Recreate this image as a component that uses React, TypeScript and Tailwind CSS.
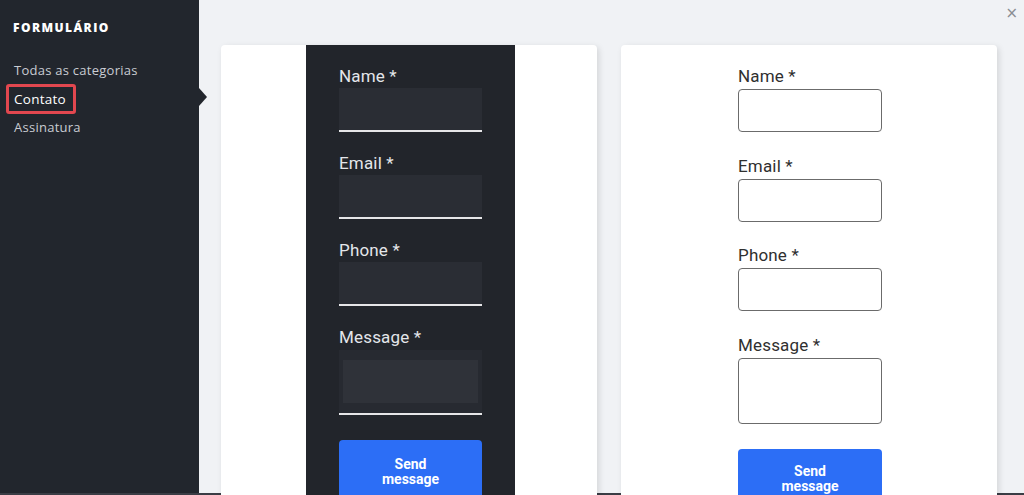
import React from "react";

const darkFields = [
  { label: "Name *" },
  { label: "Email *" },
  { label: "Phone *" },
];

function DarkForm() {
  return (
    <div className="w-[209px] h-full bg-[#22252b] pt-[20px] pl-[33px] flex flex-col" style={{ fontFamily: "Roboto, sans-serif" }}>
      {darkFields.map((f) => (
        <div key={f.label} className="flex flex-col mb-[20px]">
          <label className="text-[17px] leading-[23px] tracking-[0.01em] text-[#e4e6ea]">{f.label}</label>
          <div className="w-[143px] h-[44px] bg-[#2a2d34] border-b-2 border-[#e6e6e8]" />
        </div>
      ))}
      <div className="flex flex-col">
        <label className="text-[17px] leading-[23px] tracking-[0.01em] text-[#e4e6ea] mb-[1px]">Message *</label>
        <div className="w-[143px] h-[65px] bg-[#272a31] border-b-2 border-[#e6e6e8] pt-[10px] px-[4px]">
          <div className="h-[43px] bg-[#2f3239]" />
        </div>
      </div>
      <button className="mt-[25px] w-[143px] h-[60px] bg-[#2c6ef6] rounded-[4px] text-white font-bold text-[14px] leading-[15px] pt-[17px] flex flex-col items-center justify-start">
        <span>Send</span>
        <span>message</span>
      </button>
    </div>
  );
}

function LightForm() {
  const fields = ["Name *", "Email *", "Phone *"];
  return (
    <div className="pt-[19px] pl-[117px] flex flex-col" style={{ fontFamily: "Roboto, sans-serif" }}>
      {fields.map((f) => (
        <div key={f} className="flex flex-col mb-[21.5px]">
          <label className="text-[17px] leading-[24px] tracking-[0.01em] text-[#2f2f2f] mb-[1px]">{f}</label>
          <div className="w-[144px] h-[43px] bg-white border border-[#6b6b6b] rounded-[4px]" />
        </div>
      ))}
      <div className="flex flex-col">
        <label className="text-[17px] leading-[24px] tracking-[0.01em] text-[#2f2f2f] mb-[1px]">Message *</label>
        <div className="w-[144px] h-[66px] bg-white border border-[#6b6b6b] rounded-[4px]" />
      </div>
      <button className="mt-[25px] w-[144px] h-[60px] bg-[#2c6ef6] rounded-[4px] text-white font-bold text-[14px] leading-[15px] pt-[15px] flex flex-col items-center justify-start">
        <span>Send</span>
        <span>message</span>
      </button>
    </div>
  );
}

export default function App() {
  return (
    <div className="w-[1024px] h-[495px] flex flex-col overflow-hidden bg-[#f0f2f5]">
      <div className="flex flex-1 min-h-0">
        <aside className="relative w-[199px] shrink-0 bg-[#22262d] pt-[20px]" style={{ fontFamily: "'Open Sans', 'Noto Sans', sans-serif" }}>
          <h2 className="pl-[13px] text-[12px] leading-[16px] font-extrabold tracking-[0.12em] text-white">FORMULÁRIO</h2>
          <nav className="mt-[21px] flex flex-col text-[13px] leading-[27px] tracking-[0.02em]">
            <a className="pl-[14px] text-[#c9ccd2]">Todas as categorias</a>
            <a className="ml-[6px] pl-[5px] w-[70px] h-[30px] leading-[25px] text-[13.5px] border-[3px] border-[#e2474f] rounded-[3px] text-white">Contato</a>
            <a className="pl-[14px] text-[#c9ccd2]">Assinatura</a>
          </nav>
          <div className="absolute left-full top-[88px] w-0 h-0 border-y-[9px] border-y-transparent border-l-[8px] border-l-[#22262d]" />
        </aside>
        <main className="relative flex-1 min-w-0 pt-[45px] pl-[22px] flex gap-[24px]">
          <span className="absolute right-[6px] top-[3px] text-[#8a8d93] text-[15px] leading-[20px]" style={{ fontFamily: "'DejaVu Sans', sans-serif" }}>×</span>
          <section className="w-[376px] h-[460px] bg-white rounded-[4px] shadow-[2px_2px_6px_rgba(0,0,0,0.12)] pl-[85px]">
            <DarkForm />
          </section>
          <section className="w-[376px] h-[460px] bg-white rounded-[4px] shadow-[2px_2px_6px_rgba(0,0,0,0.12)]">
            <LightForm />
          </section>
        </main>
      </div>
      <div className="h-[2px] bg-[#3a3d45]" />
    </div>
  );
}
